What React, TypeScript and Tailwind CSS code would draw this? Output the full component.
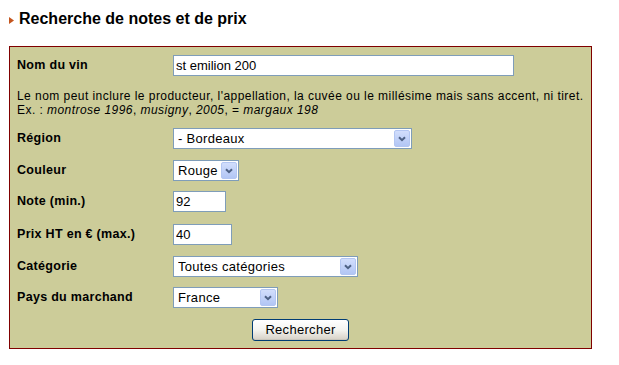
import React from "react";

function Chevron() {
  return (
    <span className="pointer-events-none absolute right-[1px] top-[1px] bottom-[1px] w-[16px] rounded-[2px] border border-[#b3c6f2] bg-gradient-to-b from-[#d2defc] to-[#b2c6f5] flex items-center justify-center">
      <svg width="8" height="6" viewBox="0 0 8 6">
        <path d="M1 1.2 L4 4.2 L7 1.2" fill="none" stroke="#4d6185" strokeWidth="2" />
      </svg>
    </span>
  );
}

function Select({ width, value, options }: { width: string; value: string; options: string[] }) {
  return (
    <div className={`relative h-[21px] border border-[#7f9db9] bg-white ${width}`}>
      <select
        defaultValue={value}
        className="block h-[19px] w-full appearance-none bg-transparent pl-[4px] pr-[18px] py-0 text-[13px] leading-[15px] tracking-[0.3px] text-black outline-none"
      >
        {options.map(o => (
          <option key={o}>{o}</option>
        ))}
      </select>
      <Chevron />
    </div>
  );
}

function Field({ width, value }: { width: string; value: string }) {
  return (
    <input
      defaultValue={value}
      className={`h-[21px] border border-[#7f9db9] bg-white px-[2px] text-[13px] text-black outline-none ${width}`}
    />
  );
}

function Row({ label, children, className = "" }: { label: string; children: React.ReactNode; className?: string }) {
  return (
    <div className={`flex items-center ${className}`}>
      <label className="w-[156px] shrink-0 text-[12.5px] font-bold tracking-[0.3px]">{label}</label>
      {children}
    </div>
  );
}

export default function App() {
  return (
    <div className="min-h-[365px] bg-white pl-[9px] text-black" style={{ fontFamily: '"Liberation Sans", Arial, sans-serif' }}>
      <h1 className="mt-[10px] flex items-center text-[16px] font-bold leading-[18px]">
        <svg width="5" height="7" viewBox="0 0 5 7" className="mr-[5px] mt-[3px]">
          <path d="M0 0 L5 3.5 L0 7 Z" fill="#c4561f" />
        </svg>
        Recherche de notes et de prix
      </h1>

      <form className="mt-[18px] flex w-[583px] flex-col border border-[#800000] bg-[#cccc99] pl-[7px] pt-[8px] pb-[7px]">
        <Row label="Nom du vin">
          <Field width="w-[341px]" value="st emilion 200" />
        </Row>

        <div className="mt-[13px] whitespace-nowrap text-[12px] leading-[14px] tracking-[0.45px]">
          <p>Le nom peut inclure le producteur, l'appellation, la cuvée ou le millésime mais sans accent, ni tiret.</p>
          <p>
            Ex. : <i>montrose 1996</i>, <i>musigny</i>, <i>2005</i>, = <i>margaux 198</i>
          </p>
        </div>

        <Row label="Région" className="mt-[11px]">
          <Select width="w-[239px]" value="- Bordeaux" options={["- Bordeaux", "- Bourgogne", "- Rhône"]} />
        </Row>
        <Row label="Couleur" className="mt-[11px]">
          <Select width="w-[66px]" value="Rouge" options={["Rouge", "Blanc", "Rosé"]} />
        </Row>
        <Row label="Note (min.)" className="mt-[10px]">
          <Field width="w-[53px]" value="92" />
        </Row>
        <Row label="Prix HT en € (max.)" className="mt-[12px]">
          <Field width="w-[59px]" value="40" />
        </Row>
        <Row label="Catégorie" className="mt-[11px]">
          <Select width="w-[185px]" value="Toutes catégories" options={["Toutes catégories"]} />
        </Row>
        <Row label="Pays du marchand" className="mt-[10px]">
          <Select width="w-[105px]" value="France" options={["France", "Belgique", "Suisse"]} />
        </Row>

        <div className="mt-[11px] flex justify-center pr-[7px]">
          <button
            type="button"
            className="h-[22px] w-[97px] rounded-[3px] border border-[#003c74] bg-gradient-to-b from-white via-[#f4f4f0] to-[#d6d0c5] text-[13px] tracking-[0.3px] text-black shadow-[inset_0_-1px_0_#c9c6bd]"
          >
            Rechercher
          </button>
        </div>
      </form>
    </div>
  );
}
